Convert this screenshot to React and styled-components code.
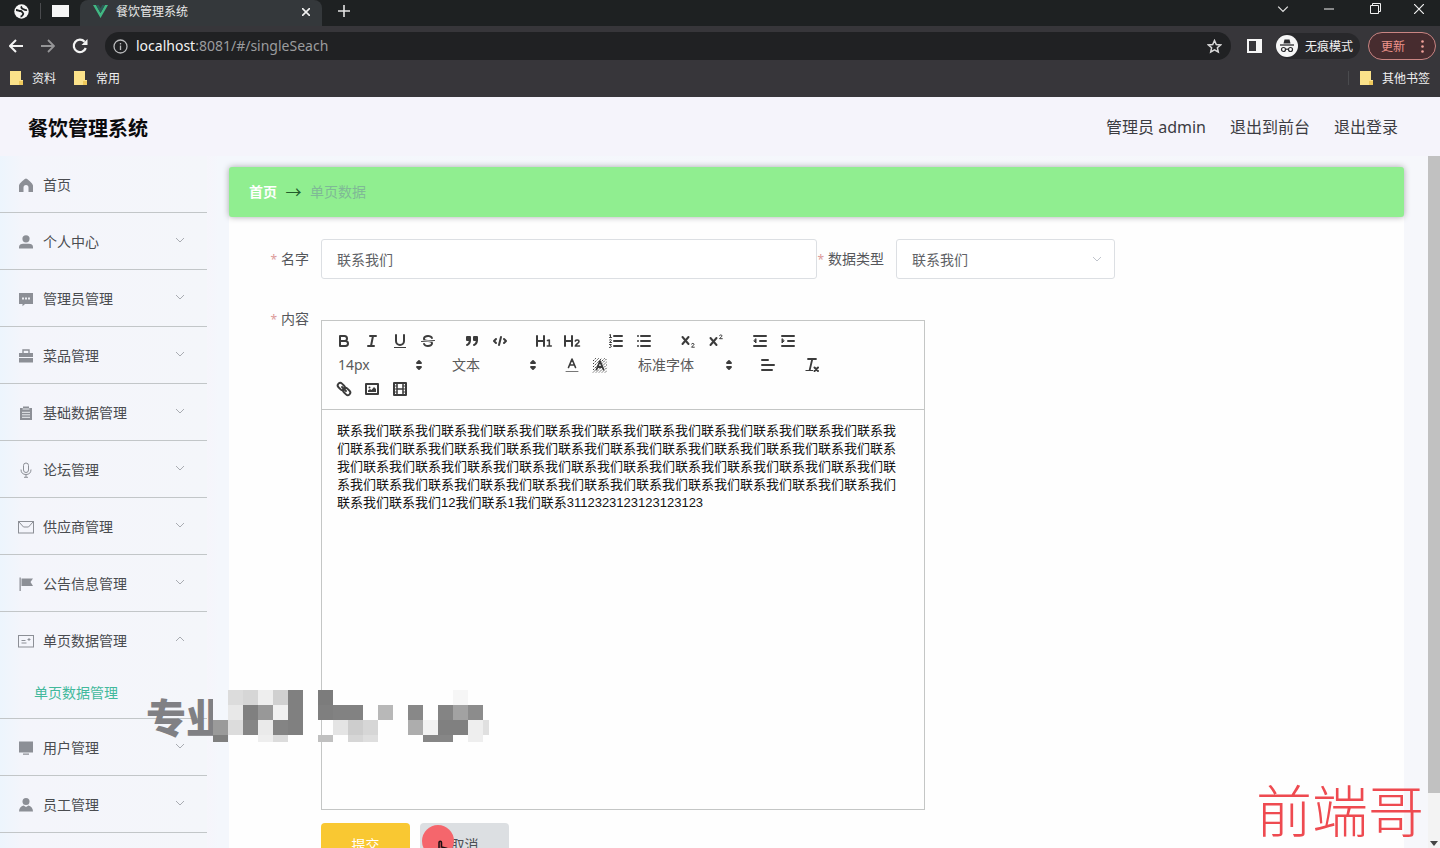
import React from "react";
import styled, { createGlobalStyle } from "styled-components";

const GlobalStyle = createGlobalStyle`
  *, *::before, *::after { box-sizing: border-box; }
  html, body, #root { height: 100%; margin: 0; }
  body {
    overflow: hidden;
    font-family: "Noto Sans", "Noto Sans CJK SC", sans-serif;
    font-size: 14px;
    color: #4a4c50;
    background: #f5f4fb;
  }
  button, input, select, textarea { font: inherit; color: inherit; }
  button { border: 0; padding: 0; background: none; cursor: pointer; }
  a { color: inherit; text-decoration: none; }
`;

/* ---------- browser frame ---------- */

const Page = styled.div`
  position: relative;
  display: flex;
  flex-direction: column;
  height: 100vh;
  overflow: hidden;
`;

const TabStrip = styled.div`
  display: flex;
  height: 26px;
  background: #1e2122;
  color: #e8e8e8;
  font-size: 12px;
`;

const PinnedTabs = styled.div`
  display: flex;
  align-items: center;
  gap: 11px;
  width: 80px;
  height: 22px;
  padding-left: 14px;
`;

const TabDivider = styled.span`
  width: 1px;
  height: ${(p) => p.$height || 16}px;
  background: #4a4b4e;
`;

const BlankTab = styled.span`
  width: 17px;
  height: 12px;
  background: #f6f6f6;
`;

const ActiveTab = styled.div`
  display: flex;
  align-items: center;
  gap: 8px;
  width: 242px;
  padding: 0 10px 3px 13px;
  border-radius: 8px 8px 0 0;
  background: #34383b;
`;

const TabTitle = styled.span`
  flex: 1;
  line-height: 22px;
`;

const StripButton = styled.button`
  display: grid;
  place-items: center;
  width: ${(p) => p.$width || 12}px;
  height: ${(p) => p.$height || 22}px;
`;

const WindowButtons = styled.div`
  display: flex;
  margin-left: auto;
`;

const Toolbar = styled.div`
  display: flex;
  align-items: center;
  height: 40px;
  padding: 0 4px 0 0;
  background: #37363a;
  color: #f1f1f1;
`;

const NavButton = styled.button`
  display: grid;
  place-items: center;
  width: 32px;
  height: 28px;
  opacity: ${(p) => (p.$dim ? 0.5 : 1)};
`;

const AddressBar = styled.div`
  display: flex;
  flex: 1;
  align-items: center;
  gap: 8px;
  height: 28px;
  margin: 0 16px 0 9px;
  padding: 0 9px 0 8px;
  border-radius: 14px;
  background: #202123;
`;

const Url = styled.span`
  flex: 1;
  font-size: 14px;
  line-height: 28px;
  color: #9b9c9e;
`;

const UrlHost = styled.span`
  color: #f3f3f3;
`;

const Incognito = styled.div`
  display: flex;
  align-items: center;
  gap: 7px;
  height: 26px;
  margin: 0 8px 0 14px;
  padding-right: 7px;
  border-radius: 13px;
  background: #28282b;
  font-size: 12px;
`;

const UpdateButton = styled.button`
  display: flex;
  align-items: center;
  justify-content: space-between;
  width: 68px;
  height: 28px;
  padding: 0 11px 0 12px;
  border: 1px solid #c98583;
  border-radius: 14px;
  background: #472c2f;
  color: #ee938b;
  font-size: 12px;
`;

const Bookmarks = styled.div`
  display: flex;
  align-items: center;
  gap: 18px;
  height: 31px;
  padding: 0 10px 8px;
  background: #37363a;
  color: #f1f1f1;
  font-size: 12px;
`;

const Bookmark = styled.a`
  display: flex;
  align-items: center;
  gap: 9px;
`;

const OtherBookmarks = styled.div`
  display: flex;
  align-items: center;
  gap: 11px;
  margin-left: auto;
`;

/* ---------- application ---------- */

const AppHeader = styled.header`
  display: flex;
  align-items: center;
  justify-content: space-between;
  height: 59px;
  padding: 0 42px 0 28px;
  background: #f5f4fb;
`;

const Brand = styled.h1`
  margin: 0;
  padding-top: 4px;
  font-size: 20px;
  line-height: 28px;
  color: #0b0b0d;
`;

const HeaderLinks = styled.nav`
  display: flex;
  gap: 24px;
  font-size: 16px;
  line-height: 24px;
  color: #3c3c42;
`;

const Body = styled.div`
  display: flex;
  flex: 1;
  min-height: 0;
`;

const Sidebar = styled.nav`
  flex: none;
  width: 207px;
  overflow: hidden;
  background: linear-gradient(90deg, #edf5fd 0, #f4f5fb 24px, #f4f6fa 100%);
`;

const MenuGroup = styled.div`
  border-bottom: 1px solid #c2c6c8;
`;

const MenuItem = styled.button`
  display: flex;
  align-items: center;
  gap: 9px;
  width: 100%;
  height: 56px;
  padding: 2px 22px 0 18px;
  text-align: left;
  color: #4a4c50;
  & > span + svg { margin-bottom: 5px; }
`;

const MenuIcon = styled.svg`
  flex: none;
  width: 16px;
  height: 16px;
  fill: #8c8f96;
  stroke: none;
`;

const MenuLabel = styled.span`
  flex: 1;
  line-height: 20px;
`;

const SubItem = styled.a`
  display: block;
  padding-left: 34px;
  line-height: 50px;
  color: #42b99c;
`;

const Main = styled.main`
  flex: 1;
  min-width: 0;
  padding: 11px 24px 0 22px;
  background: linear-gradient(90deg, #f6f5fb 0, #f4f7fc 12px, #f6f7fb 100%);
  overflow: hidden;
`;

const Breadcrumb = styled.nav`
  position: relative;
  display: flex;
  align-items: center;
  gap: 8px;
  height: 50px;
  padding: 0 20px 2px;
  border-radius: 3px;
  background: #90ee90;
  box-shadow: 0 0 6px #a9a9ad;
`;

const CrumbHome = styled.a`
  font-weight: 700;
  color: #ffffff;
`;

const CrumbArrow = styled.span`
  width: 17px;
  font-family: "Noto Sans CJK SC", sans-serif;
  font-size: 16px;
  line-height: 20px;
  text-align: center;
  color: #235c2c;
`;

const CrumbCurrent = styled.span`
  color: #7fb996;
`;

const Card = styled.form`
  min-height: 100%;
  padding: 22px 20px 0;
  background: #fefefe;
`;

const FormRow = styled.div`
  display: flex;
  margin-bottom: ${(p) => p.$gap || 0}px;
`;

const Label = styled.label`
  flex: none;
  width: ${(p) => p.$width}px;
  height: 40px;
  padding-right: 12px;
  text-align: right;
  line-height: 40px;
  white-space: nowrap;
  color: #55575b;
  &::before {
    content: "*";
    margin-right: 4px;
    font-size: 12px;
    line-height: 20px;
    color: #dc9a9a;
  }
`;

const TextInput = styled.input`
  flex: 0 1 496px;
  min-width: 0;
  height: 40px;
  padding: 0 15px;
  border: 1px solid #dcdfe3;
  border-radius: 3px;
  background: #fff;
  color: #606266;
  outline: 0;
`;

const SelectWrap = styled.div`
  position: relative;
  display: flex;
  flex: none;
  width: ${(p) => p.$width}px;
  & > svg {
    position: absolute;
    right: ${(p) => p.$iconRight}px;
    top: 50%;
    transform: translateY(-50%);
    pointer-events: none;
  }
`;

const FieldSelect = styled.select`
  width: 100%;
  height: 40px;
  padding: 0 15px;
  appearance: none;
  border: 1px solid #dcdfe3;
  border-radius: 3px;
  background: #fff;
  color: #606266;
`;

const EditorColumn = styled.div`
  flex: 0 1 604px;
  min-width: 0;
  padding-top: 21px;
`;

const Editor = styled.div`
  border: 1px solid #c4c6c5;
  background: #fefefe;
`;

const EditorToolbar = styled.div`
  display: flex;
  flex-wrap: wrap;
  padding: 8px 0 8px 8px;
  border-bottom: 1px solid #c4c6c5;
`;

const ToolGroup = styled.div`
  display: flex;
  margin-right: 16px;
`;

const ToolButton = styled.button`
  display: grid;
  place-items: center;
  width: 28px;
  height: 24px;
`;

const ToolIcon = styled.svg`
  width: 18px;
  height: 18px;
  fill: none;
  stroke: #3c3c3c;
  stroke-width: 2;
  stroke-linecap: round;
  stroke-linejoin: round;
  .thin { stroke-width: 1; }
  .fill { fill: #3c3c3c; stroke: none; }
  .solid { fill: #3c3c3c; }
`;

const ToolSelect = styled.select`
  width: 100%;
  height: 24px;
  padding: 0 8px 2px;
  appearance: none;
  border: 0;
  background: transparent;
  color: #5a5a5a;
`;

const EditorText = styled.textarea`
  display: block;
  width: 100%;
  height: 399px;
  padding: 12px 17px 12px 15px;
  border: 0;
  outline: 0;
  resize: none;
  overflow: hidden;
  background: transparent;
  font-family: "Liberation Sans", "Noto Sans CJK SC", sans-serif;
  font-size: 13px;
  line-height: 18px;
  color: #141414;
`;

const Actions = styled.div`
  display: flex;
  gap: 10px;
  padding: 13px 0 0;
`;

const ActionButton = styled.button`
  width: 89px;
  height: 42px;
  border-radius: 4px;
  background: ${(p) => (p.$primary ? "#f9c832" : "#dcdfe2")};
  color: ${(p) => (p.$primary ? "#ffffff" : "#4c4f54")};
`;

const ScrollTrack = styled.div`
  display: flex;
  flex-direction: column;
  flex: none;
  width: 12px;
  background: #f3f3f3;
`;

const ScrollThumb = styled.div`
  flex: 636;
  background: #c1c1c1;
`;

const ScrollRest = styled.div`
  display: flex;
  flex: 55;
  align-items: flex-end;
  justify-content: center;
`;

/* ---------- overlays ---------- */

const ChannelMark = styled.div`
  position: absolute;
  left: 146px;
  top: 690px;
  display: flex;
  pointer-events: none;
`;

const ChannelText = styled.span`
  width: 67px;
  overflow: hidden;
  white-space: nowrap;
  font-size: 40px;
  font-weight: 900;
  line-height: 56px;
  color: #808084;
`;

const AuthorMark = styled.div`
  position: absolute;
  right: 16px;
  bottom: 0;
  font-size: 56px;
  font-weight: 300;
  line-height: 76px;
  color: #ee4a50;
  pointer-events: none;
`;

const Pointer = styled.svg`
  position: absolute;
  left: 421px;
  top: 824px;
  pointer-events: none;
`;

/* ---------- data ---------- */

const menuIcons = {
  home: <path d="M8 1.500c-1 0-7 5-7 7V15h4.500v-4.500a2.500 2.500 0 0 1 5 0V15H15V8.500c0-2-6-7-7-7z" />,
  user: (
    <>
      <circle cx="8" cy="4.800" r="3.600" />
      <path d="M1 14.500V13c0-2 2-3.200 4-3.200h6c2 0 4 1.200 4 3.200v1.500z" />
    </>
  ),
  chat: (
    <>
      <path d="M1 2h14v11H7l-2.500 2.300V13H1z" />
      <path d="M4 6.500h2v2H4zM7 6.500h2v2H7zM10 6.500h2v2h-2z" fill="#eceef2" />
    </>
  ),
  briefcase: (
    <>
      <path d="M5 5V2h6v3" fill="none" stroke="#8c8f96" strokeWidth="1.400" />
      <path d="M1 5h14v4H1zM1 10h14v4.500H1z" />
    </>
  ),
  clipboard: (
    <>
      <path d="M2 3h3V1.500h6V3h3v12H2z" />
      <path d="M4.500 4h7M4 7.300h8M4 9.800h8M4 12.300h8" stroke="#eceef2" />
    </>
  ),
  mic: (
    <g fill="none" stroke="#8c8f96">
      <rect x="5.500" y="1" width="5" height="9.500" rx="2.500" />
      <path d="M3 7.500c0 3.500 2 5 5 5s5-1.500 5-5M8 12.500V15M6 15.300h4" />
    </g>
  ),
  mail: (
    <g fill="none" stroke="#8c8f96">
      <rect x=".5" y="2.500" width="15" height="11.500" />
      <path d="m1 3 4.500 5h5L15 3" />
    </g>
  ),
  flag: <path d="M1.500 1.500h1.300v13.500H1.500zM3.500 2.500H15L12.500 6l2.500 4H3.500z" />,
  card: (
    <g fill="none" stroke="#8c8f96">
      <rect x=".5" y="2.500" width="15" height="11.500" />
      <path d="M3.500 7.500h4M3.500 10h5M9.500 6.500h3M11 5v3" />
    </g>
  ),
  monitor: <path d="M1 1.500h14v11H1zM5 13.500h6v1.300H5z" />,
  staff: (
    <>
      <circle cx="8" cy="4.500" r="3.500" />
      <path d="M5.500 8.500 8 10l2.500-1.500C13 9 15 11 15 14.500H1C1 11 3 9 5.500 8.500z" />
    </>
  ),
};

const menu = [
  { icon: "home", label: "首页", leaf: true },
  { icon: "user", label: "个人中心" },
  { icon: "chat", label: "管理员管理" },
  { icon: "briefcase", label: "菜品管理" },
  { icon: "clipboard", label: "基础数据管理" },
  { icon: "mic", label: "论坛管理" },
  { icon: "mail", label: "供应商管理" },
  { icon: "flag", label: "公告信息管理" },
  { icon: "card", label: "单页数据管理", child: "单页数据管理" },
  { icon: "monitor", label: "用户管理" },
  { icon: "staff", label: "员工管理" },
];

const tools = {
  bold: <path d="M5 4h4.500a2.500 2.500 0 0 1 0 5H5zM5 9h5.500a2.500 2.500 0 0 1 0 5H5z" />,
  italic: <path d="M7 4h6M5 14h6M8 14l2-10" />,
  underline: (
    <>
      <path d="M5 3v6a4 4 0 0 0 8 0V3" />
      <rect className="fill" x="3" y="15" width="12" height="1" />
    </>
  ),
  strike: (
    <>
      <path className="thin" d="M15.500 8.500l-13 1" />
      <path className="fill" d="M9.007,8C6.542,7.791,6,7.519,6,6.500,6,5.792,7.283,5,9,5c1.571,0,2.765.679,2.969,1.309a1,1,0,0,0,1.900-.617C13.356,4.106,11.354,3,9,3,6.200,3,4,4.538,4,6.500a3.200,3.200,0,0,0,.5,1.843Z" />
      <path className="fill" d="M8.984,10C11.457,10.208,12,10.479,12,11.500c0,0.708-1.283,1.500-3,1.500-1.571,0-2.765-.679-2.969-1.309a1,1,0,1,0-1.900.617C4.644,13.894,6.646,15,9,15c2.800,0,5-1.538,5-3.500a3.200,3.200,0,0,0-.5-1.843Z" />
    </>
  ),
  quote: (
    <>
      <rect className="solid" x="4" y="5" width="3" height="3" />
      <rect className="solid" x="11" y="5" width="3" height="3" />
      <path className="solid" d="M7 8c0 4-3 5-3 5M14 8c0 4-3 5-3 5" />
    </>
  ),
  code: <path d="M5 7 3 9l2 2M13 7l2 2-2 2M10 5 8 13" />,
  h1: (
    <>
      <path d="M2 4v10M9 4v10M2 9h7" />
      <path strokeWidth="1.600" d="M12.500 8.500 14.300 8v6M12.300 14h4" />
    </>
  ),
  h2: (
    <>
      <path d="M2 4v10M9 4v10M2 9h7" />
      <path strokeWidth="1.600" d="M12.300 9c.7-1.300 3.700-1.300 3.700.4 0 1.600-3 2.600-3.700 4.600h4.200" />
    </>
  ),
  ordered: (
    <>
      <path d="M7 4h8M7 9h8M7 14h8" />
      <path className="thin" d="M2.500 3 3.500 2.500v3M2.500 5.500h2M2.500 8c1-1 2-.5 1.800.5L2.500 10.500h2M2.500 12.500h1.800l-.8 1.300c1.500.2 1 2-1 1.700" />
    </>
  ),
  bullet: <path d="M6 4h9M6 9h9M6 14h9M3 4h0M3 9h0M3 14h0" />,
  sub: (
    <>
      <path d="M3.500 5l6 7M9.500 5l-6 7" />
      <path className="thin" d="M12.500 12c.6-1 2.500-.8 2.500.4 0 1-2 1.600-2.500 2.800H15.300" />
    </>
  ),
  sup: (
    <>
      <path d="M3.500 6l6 7M9.500 6l-6 7" />
      <path className="thin" d="M12.500 3.500c.6-1 2.500-.8 2.500.4 0 1-2 1.600-2.500 2.800H15.300" />
    </>
  ),
  outdent: (
    <>
      <path d="M3 14h12M3 4h12M9 9h6" />
      <path className="solid" strokeWidth="1" d="M5 7v4L3 9z" />
    </>
  ),
  indent: (
    <>
      <path d="M3 14h12M3 4h12M9 9h6" />
      <path className="solid" strokeWidth="1" d="M3 7v4l2-2z" />
    </>
  ),
  color: (
    <>
      <path className="thin" d="M3 15.500h12" stroke="#777" />
      <path strokeWidth="1.600" d="M5.500 11.500 9 3l3.500 8.500M7 9h4" />
    </>
  ),
  background: (
    <>
      <path className="thin" strokeLinecap="butt" strokeDasharray="1.500 1" d="M2 5l3-3M2 8l6-6M2 11l9-9M2 14l12-12M2 16.500 16 2.500M5 16.500l11-11M8 16.500l8-8M11 16.500l5-5M14 16.500l2-2" />
      <path strokeWidth="1.800" d="M5.500 13.500 9 5l3.500 8.500M7 11h4" />
    </>
  ),
  align: <path d="M3 9h12M3 14h10M3 4h6" />,
  clean: (
    <>
      <path strokeWidth="1.800" d="M5 3h8M6.700 14 9.300 3" />
      <path d="M11.500 11.500l3.500 3.500M15 11.500 11.500 15" />
      <rect className="fill" x="2.500" y="14" width="7.500" height="1" />
    </>
  ),
  link: (
    <g strokeWidth="1.900">
      <rect x="2.300" y="4" width="8" height="5" rx="2.500" transform="rotate(45 6.300 6.500)" />
      <rect x="7.700" y="9" width="8" height="5" rx="2.500" transform="rotate(45 11.700 11.500)" />
      <path d="M7 7l4 4" />
    </g>
  ),
  image: (
    <>
      <rect x="3" y="4" width="12" height="10" strokeWidth="2" />
      <circle className="fill" cx="6.500" cy="7.500" r="1" />
      <path className="fill" d="M5 12v-1.500L7 9l1.500 1L11 7l2 2v3z" />
    </>
  ),
  video: (
    <>
      <rect x="3" y="3" width="12" height="12" strokeWidth="2" />
      <path strokeWidth="1.500" d="M6 3v12M12 3v12M6 9h6" />
      <path className="thin" d="M3 6h3M3 9h3M3 12h3M12 6h3M12 9h3M12 12h3" />
    </>
  ),
};

/* Mosaic tiles: [column, row, width in tiles, grey level] */
const tiles = [
  [1, 0, 1, "dc"], [2, 0, 1, "d6"], [3, 0, 1, "ee"], [4, 0, 1, "d0"], [5, 0, 1, "80"], [7, 0, 1, "7c"], [16, 0, 1, "f6"],
  [1, 1, 1, "e8"], [2, 1, 1, "80"], [3, 1, 1, "98"], [4, 1, 1, "f0"], [5, 1, 1, "80"], [7, 1, 1, "7f"], [8, 1, 2, "82"],
  [11, 1, 1, "b8"], [13, 1, 1, "88"], [15, 1, 1, "84"], [16, 1, 1, "a2"], [17, 1, 1, "8c"],
  [0, 2, 1, "9a"], [1, 2, 1, "dc"], [2, 2, 1, "85"], [3, 2, 1, "ea"], [4, 2, 1, "84"], [5, 2, 1, "80"], [8, 2, 1, "e4"],
  [9, 2, 1, "cd"], [10, 2, 1, "d6"], [13, 2, 1, "ad"], [14, 2, 1, "f2"], [15, 2, 2, "80"], [17, 2, 1, "ee"], [18, 2, 0.4, "e0"],
  [0, 3, 1, "7f"], [3, 3, 1, "ee"], [4, 3, 1, "dc"], [7, 3, 1, "c0"], [9, 3, 1, "d6"], [10, 3, 1, "de"], [14, 3, 2, "86"], [17, 3, 1, "ee"],
];

const article =
  "联系我们".repeat(45) + "12我们联系1我们联系3112323123123123123";

/* ---------- small drawings ---------- */

const Chevron = ({ up, size = 10, color = "#a9acb2" }) => (
  <svg width={size} height={size} viewBox="0 0 10 10" fill="none" stroke={color}>
    <path d={up ? "M1 7l4-4 4 4" : "M1 3l4 4 4-4"} />
  </svg>
);

const Folder = () => (
  <svg width="13" height="14" viewBox="0 0 13 14">
    <path d="M0 0h11v9h2v5H0z" fill="#fbe28a" />
    <path d="M9 14v-4h4v4z" fill="#efc95c" />
  </svg>
);

const Tool = ({ name, label }) => (
  <ToolButton type="button" aria-label={label}>
    <ToolIcon viewBox="0 0 18 18">{tools[name]}</ToolIcon>
  </ToolButton>
);

const Picker = ({ label, value, width }) => (
  <SelectWrap $width={width} $iconRight={0}>
    <ToolSelect aria-label={label} defaultValue={value}>
      <option>{value}</option>
    </ToolSelect>
    <ToolIcon viewBox="0 0 18 18">
      <path className="solid" strokeWidth="1.800" d="M7 11l2 2 2-2zM7 7l2-2 2 2z" />
    </ToolIcon>
  </SelectWrap>
);

/* ---------- sections ---------- */

function BrowserFrame() {
  return (
    <>
      <TabStrip>
        <PinnedTabs>
          <svg width="15" height="15" viewBox="0 0 15 15">
            <circle cx="7.500" cy="7.500" r="7.200" fill="#f6f6f6" />
            <path d="M2 6c2 0 3 1 4.500 1S8 8.500 9 9s-1 3.500-2.500 3.500M8 2.500c-1.500 1 0 2 1 2.500s2 1.500 4 1" fill="none" stroke="#1e2122" strokeWidth="1.800" />
          </svg>
          <TabDivider />
          <BlankTab />
        </PinnedTabs>
        <ActiveTab>
          <svg width="15" height="13" viewBox="0 0 15 13">
            <path d="M0 0h3l4.500 8L12 0h3L7.500 13z" fill="#41b883" />
            <path d="M3 0h2.700l1.800 3.200L9.300 0H12L7.500 8z" fill="#2c5a55" />
          </svg>
          <TabTitle>餐饮管理系统</TabTitle>
          <StripButton aria-label="关闭标签页">
            <svg width="8" height="8" viewBox="0 0 8 8" stroke="#f1f1f1" strokeWidth="1.600"><path d="M0 0l8 8M8 0 0 8" /></svg>
          </StripButton>
        </ActiveTab>
        <StripButton $width={44} aria-label="新标签页">
          <svg width="12" height="12" viewBox="0 0 12 12" stroke="#e4e4e4" strokeWidth="1.600"><path d="M6 0v12M0 6h12" /></svg>
        </StripButton>
        <WindowButtons>
          <StripButton $width={46} $height={17} aria-label="搜索标签页"><Chevron size={12} color="#e4e4e4" /></StripButton>
          <StripButton $width={46} $height={17} aria-label="最小化">
            <svg width="10" height="2"><path d="M0 1h10" stroke="#f1f1f1" /></svg>
          </StripButton>
          <StripButton $width={46} $height={17} aria-label="还原">
            <svg width="11" height="11" viewBox="0 0 11 11" fill="none" stroke="#f1f1f1"><path d="M.5 2.500h8v8h-8zM2.500 2.500v-2h8v8h-2" /></svg>
          </StripButton>
          <StripButton $width={42} $height={17} aria-label="关闭窗口">
            <svg width="10" height="10" viewBox="0 0 10 10" stroke="#f1f1f1" strokeWidth="1.200"><path d="M0 0l10 10M10 0 0 10" /></svg>
          </StripButton>
        </WindowButtons>
      </TabStrip>
      <Toolbar>
        <NavButton aria-label="后退">
          <svg width="14" height="14" viewBox="0 0 14 14" fill="none" stroke="#f3f3f3" strokeWidth="2"><path d="M14 7H1.500M7 1 1 7l6 6" /></svg>
        </NavButton>
        <NavButton $dim aria-label="前进">
          <svg width="14" height="14" viewBox="0 0 14 14" fill="none" stroke="#f3f3f3" strokeWidth="1.800"><path d="M0 7h12.500M7 1l6 6-6 6" /></svg>
        </NavButton>
        <NavButton aria-label="刷新">
          <svg width="16" height="16" viewBox="0 0 16 16" fill="none" stroke="#f3f3f3" strokeWidth="2.200">
            <path d="M13.800 10a6.200 6.200 0 1 1-1.200-6.300" />
            <path d="M15.500 1v6h-6z" fill="#f3f3f3" stroke="none" />
          </svg>
        </NavButton>
        <AddressBar>
          <svg width="15" height="15" viewBox="0 0 15 15" fill="none" stroke="#b9babc" strokeWidth="1.300"><circle cx="7.500" cy="7.500" r="6.500" /><path d="M7.500 6.500V11M7.500 4v1.500" /></svg>
          <Url><UrlHost>localhost</UrlHost>:8081/#/singleSeach</Url>
          <svg width="15" height="15" viewBox="0 0 15 15" fill="none" stroke="#d8d8d8" strokeWidth="1.500"><path d="M7.500 1.500l1.800 4 4.300.4-3.200 2.900.9 4.200-3.800-2.200L3.700 13l.9-4.200L1.400 5.900l4.300-.4z" /></svg>
        </AddressBar>
        <svg width="15" height="14" viewBox="0 0 15 14"><path d="M0 0h15v14H0zM2 2v10h7V2z" fill="#f6f6f6" fillRule="evenodd" /></svg>
        <Incognito>
          <svg width="22" height="22" viewBox="0 0 22 22">
            <circle cx="11" cy="11" r="11" fill="#f6f6f6" />
            <path d="M7.500 8.500 8.500 4.500h5l1 4z" fill="#2b2b2e" />
            <path d="M4 10h14" stroke="#2b2b2e" strokeWidth="1.300" />
            <g fill="none" stroke="#2b2b2e" strokeWidth="1.200"><circle cx="7.500" cy="14.500" r="2" /><circle cx="14.500" cy="14.500" r="2" /><path d="M9.500 14.200h3" /></g>
          </svg>
          <span>无痕模式</span>
        </Incognito>
        <UpdateButton>
          更新
          <svg width="3" height="13" viewBox="0 0 3 13" fill="#f2a29b"><circle cx="1.500" cy="1.500" r="1.300" /><circle cx="1.500" cy="6.500" r="1.300" /><circle cx="1.500" cy="11.500" r="1.300" /></svg>
        </UpdateButton>
      </Toolbar>
      <Bookmarks>
        <Bookmark href="#"><Folder />资料</Bookmark>
        <Bookmark href="#"><Folder />常用</Bookmark>
        <OtherBookmarks>
          <TabDivider $height={14} />
          <Bookmark href="#"><Folder />其他书签</Bookmark>
        </OtherBookmarks>
      </Bookmarks>
    </>
  );
}

function SideMenu() {
  return (
    <Sidebar>
      {menu.map((item) => (
        <MenuGroup key={item.label}>
          <MenuItem type="button">
            <MenuIcon viewBox="0 0 16 16">{menuIcons[item.icon]}</MenuIcon>
            <MenuLabel>{item.label}</MenuLabel>
            {!item.leaf && <Chevron up={Boolean(item.child)} />}
          </MenuItem>
          {item.child && <SubItem href="#/singleSeach">{item.child}</SubItem>}
        </MenuGroup>
      ))}
    </Sidebar>
  );
}

function RichEditor() {
  return (
    <Editor>
      <EditorToolbar>
        <ToolGroup>
          <Tool name="bold" label="加粗" />
          <Tool name="italic" label="斜体" />
          <Tool name="underline" label="下划线" />
          <Tool name="strike" label="删除线" />
        </ToolGroup>
        <ToolGroup>
          <Tool name="quote" label="引用" />
          <Tool name="code" label="代码" />
        </ToolGroup>
        <ToolGroup>
          <Tool name="h1" label="一级标题" />
          <Tool name="h2" label="二级标题" />
        </ToolGroup>
        <ToolGroup>
          <Tool name="ordered" label="有序列表" />
          <Tool name="bullet" label="无序列表" />
        </ToolGroup>
        <ToolGroup>
          <Tool name="sub" label="下标" />
          <Tool name="sup" label="上标" />
        </ToolGroup>
        <ToolGroup>
          <Tool name="outdent" label="减少缩进" />
          <Tool name="indent" label="增加缩进" />
        </ToolGroup>
        <ToolGroup><Picker label="字号" value="14px" width={98} /></ToolGroup>
        <ToolGroup><Picker label="段落" value="文本" width={98} /></ToolGroup>
        <ToolGroup>
          <Tool name="color" label="文字颜色" />
          <Tool name="background" label="背景颜色" />
        </ToolGroup>
        <ToolGroup><Picker label="字体" value="标准字体" width={108} /></ToolGroup>
        <ToolGroup><Tool name="align" label="对齐" /></ToolGroup>
        <ToolGroup><Tool name="clean" label="清除格式" /></ToolGroup>
        <ToolGroup>
          <Tool name="link" label="链接" />
          <Tool name="image" label="图片" />
          <Tool name="video" label="视频" />
        </ToolGroup>
      </EditorToolbar>
      <EditorText id="content" spellCheck={false} defaultValue={article} />
    </Editor>
  );
}

export default function App() {
  return (
    <Page>
      <GlobalStyle />
      <BrowserFrame />
      <AppHeader>
        <Brand>餐饮管理系统</Brand>
        <HeaderLinks>
          <span>管理员 admin</span>
          <a href="#/front">退出到前台</a>
          <a href="#/login">退出登录</a>
        </HeaderLinks>
      </AppHeader>
      <Body>
        <SideMenu />
        <Main>
          <Breadcrumb>
            <CrumbHome href="#/">首页</CrumbHome>
            <CrumbArrow>→</CrumbArrow>
            <CrumbCurrent>单页数据</CrumbCurrent>
          </Breadcrumb>
          <Card>
            <FormRow $gap={20}>
              <Label $width={72} htmlFor="name">名字</Label>
              <TextInput id="name" defaultValue="联系我们" />
              <Label $width={79} htmlFor="kind">数据类型</Label>
              <SelectWrap $width={219} $iconRight={13}>
                <FieldSelect id="kind" defaultValue="联系我们">
                  <option>联系我们</option>
                </FieldSelect>
                <Chevron color="#c0c4cc" />
              </SelectWrap>
            </FormRow>
            <FormRow>
              <Label $width={72} htmlFor="content">内容</Label>
              <EditorColumn>
                <RichEditor />
                <Actions>
                  <ActionButton type="button" $primary>提交</ActionButton>
                  <ActionButton type="button">取消</ActionButton>
                </Actions>
              </EditorColumn>
            </FormRow>
          </Card>
        </Main>
        <ScrollTrack>
          <ScrollThumb />
          <ScrollRest>
            <svg width="8" height="7" viewBox="0 0 8 7"><path d="M0 0h8L4 5z" fill="#444" /></svg>
          </ScrollRest>
        </ScrollTrack>
      </Body>
      <ChannelMark>
        <ChannelText>专业</ChannelText>
        <svg width="276" height="52" viewBox="0 0 276 52" shapeRendering="crispEdges">
          {tiles.map(([c, r, w, g]) => (
            <rect key={`${c}-${r}`} x={c * 15} y={r * 15} width={w * 15} height={r === 3 ? 7 : 15} fill={`#${g}${g}${g}`} />
          ))}
        </svg>
      </ChannelMark>
      <AuthorMark>前端哥</AuthorMark>
      <Pointer width="34" height="34" viewBox="0 0 34 34">
        <circle cx="17" cy="17" r="16" fill="#f5666c" />
        <path d="M18 18.500c0-1.800 2.500-1.800 2.500 0v4.500l5 1.200c1.500.4 2 1.500 2 3V34h-8l-4-7c-.8-1.500.8-2.500 2.500-1z" fill="#d0545a" stroke="#1c1012" strokeWidth="1.500" />
      </Pointer>
    </Page>
  );
}
